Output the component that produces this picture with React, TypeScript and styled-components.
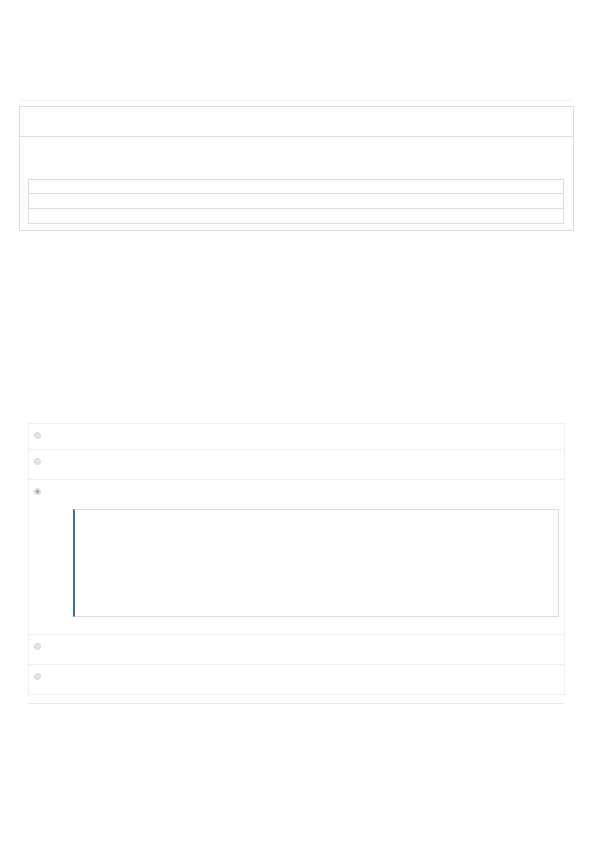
import React from "react";
import styled, { createGlobalStyle } from "styled-components";

const GlobalStyle = createGlobalStyle`
  body {
    margin: 0;
    background: #ffffff;
    font-family: "Liberation Sans", Arial, sans-serif;
  }
`;

const Page = styled.div`
  width: 595px;
  min-height: 841px;
  box-sizing: border-box;
  padding: 100px 21px 0 19px;
`;

const Rule = styled.div`
  height: 1px;
  background: #f4f4f4;
  margin-right: 1px;
`;

const Panel = styled.section`
  margin-top: 5px;
  border: 1px solid #dddddd;
`;

const PanelHeader = styled.div`
  height: 29px;
  border-bottom: 1px solid #dddddd;
`;

const PanelBody = styled.div`
  padding: 42px 9px 6px 8px;
`;

const Table = styled.div`
  border: 1px solid #dddddd;
  display: flex;
  flex-direction: column;
`;

const TableRow = styled.div`
  height: 14px;
  &:first-child {
    height: 13px;
  }
  & + & {
    border-top: 1px solid #dddddd;
  }
`;

const Accordion = styled.div`
  margin: 192px 9px 0 9px;
  border: 1px solid #f0f0f0;
`;

const Item = styled.div`
  & + & {
    border-top: 1px solid #f0f0f0;
  }
`;

const ItemHead = styled.div<{ $h: number }>`
  height: ${({ $h }) => $h}px;
  box-sizing: border-box;
  padding: 8px 0 0 5px;
  display: flex;
  align-items: flex-start;
`;

const Radio = styled.span<{ $on?: boolean }>`
  width: 7px;
  height: 7px;
  border-radius: 50%;
  background: #e2e2e2;
  border: 1px solid #d6d6d6;
  box-sizing: border-box;
  display: flex;
  align-items: center;
  justify-content: center;
  &::after {
    content: "";
    width: 3px;
    height: 3px;
    border-radius: 50%;
    background: ${({ $on }) => ($on ? "#9a9a9a" : "transparent")};
  }
`;

const ItemBody = styled.div`
  padding: 0 5px 17px 44px;
`;

const Quote = styled.div`
  height: 106px;
  border: 1px solid #dddddd;
  border-left: 2px solid #3b6da3;
`;

const BottomRule = styled.div`
  margin: 8px 10px 0 9px;
  height: 1px;
  background: #e8e8e8;
`;

const items = [
  { h: 25, open: false },
  { h: 29, open: false },
  { h: 29, open: true },
  { h: 29, open: false },
  { h: 29, open: false },
];

export default function App() {
  return (
    <>
      <GlobalStyle />
      <Page>
        <Rule />
        <Panel>
          <PanelHeader />
          <PanelBody>
            <Table>
              <TableRow />
              <TableRow />
              <TableRow />
            </Table>
          </PanelBody>
        </Panel>
        <Accordion>
          {items.map((it, i) => (
            <Item key={i}>
              <ItemHead $h={it.open ? 29 : it.h}>
                <Radio $on={it.open} />
              </ItemHead>
              {it.open && (
                <ItemBody>
                  <Quote />
                </ItemBody>
              )}
            </Item>
          ))}
        </Accordion>
        <BottomRule />
      </Page>
    </>
  );
}
